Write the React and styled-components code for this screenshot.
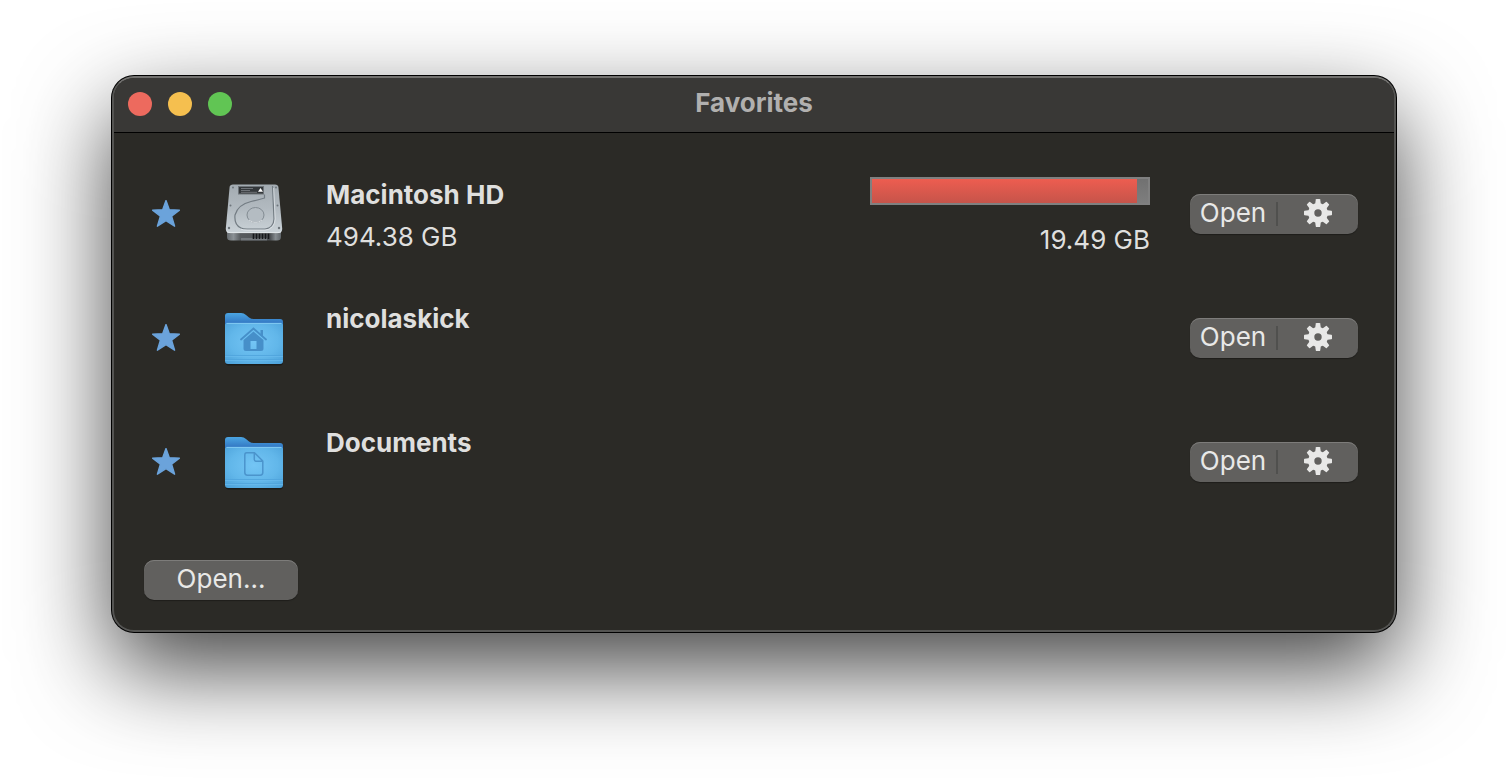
import React, { useState } from "react";
import styled, { createGlobalStyle } from "styled-components";

const GlobalStyle = createGlobalStyle`
  * {
    box-sizing: border-box;
  }
  body {
    margin: 0;
    background-color: #ffffff;
    font-family: Inter, "Liberation Sans", sans-serif;
    font-size: 26px;
    color: #dfdfde;
    overflow-x: hidden;
  }
  button {
    font: inherit;
    color: inherit;
    border: none;
    padding: 0;
    background: transparent;
  }
`;
const Desktop = styled.div`
  padding: 76px 112px 148px;
`;
const Window = styled.main`
  border: 2px solid #545452;
  border-top-color: #72716f;
  border-radius: 22px;
  background-color: #2b2a26;
  box-shadow: 0 0 0 1px #000000, 0 36px 92px rgba(0, 0, 0, 0.74);
`;
const TitleBar = styled.header`
  display: grid;
  grid-template-columns: 1fr auto 1fr;
  align-items: center;
  height: 55px;
  padding: 0 14px 2px;
  border-bottom: 1px solid #000000;
  border-radius: 20px 20px 0 0;
  background-color: #393836;
`;
const Lights = styled.div`
  display: flex;
  gap: 16px;
`;
const Light = styled.button`
  width: 24px;
  height: 24px;
  border-radius: 50%;
  background-color: ${(props) => props.$color};
`;
const Title = styled.h1`
  margin: 0;
  font-size: 26px;
  font-weight: 700;
  line-height: 32px;
  padding-bottom: 2px;
  color: #b1b0af;
`;
const List = styled.ul`
  list-style-type: none;
  margin: 0;
  padding: 19px 36px 0 38px;
`;
const Item = styled.li`
  display: flex;
  align-items: center;
  height: 124px;
`;
const StarButton = styled.button`
  width: 28px;
  height: 28px;
  margin-right: 42px;
  svg {
    display: block;
  }
`;
const IconBlock = styled.div`
  width: 64px;
  height: 64px;
  margin-right: 40px;
  svg {
    display: block;
  }
`;
const TextBlock = styled.div`
  flex: 1;
  align-self: flex-start;
  padding-top: 22px;
  p {
    margin: 0;
    line-height: 42px;
  }
`;
const Name = styled.h2`
  margin: 0;
  font-size: 26px;
  font-weight: 700;
  line-height: 42px;
`;
const UsageBlock = styled.div`
  align-self: flex-start;
  width: 280px;
  margin-right: 40px;
  padding-top: 25px;
  text-align: right;
  p {
    margin: 14px 0 0;
    line-height: 42px;
  }
`;
const Bar = styled.div`
  height: 28px;
  border: 2px solid #808080;
  background: linear-gradient(#717171, #7e7e7e);
`;
const BarFill = styled.div`
  height: 100%;
  background: linear-gradient(#ed5d50, #c6544a);
`;
const buttonFace = `
  height: 40px;
  border-radius: 10px;
  background-color: #61605e;
  box-shadow: inset 0 1px 0 #7d7c7a, 0 1px 1px rgba(0, 0, 0, 0.3);
  color: #e8e8e7;
  line-height: 38px;
`;
const SplitButton = styled.div`
  ${buttonFace}
  display: flex;
  align-items: center;
  width: 168px;
`;
const OpenButton = styled.button`
  width: 86px;
  height: 40px;
  padding-bottom: 2px;
`;
const Divider = styled.span`
  width: 2px;
  height: 24px;
  background-color: #50504e;
`;
const GearButton = styled.button`
  display: flex;
  flex: 1;
  align-items: center;
  justify-content: center;
  height: 40px;
  padding-bottom: 2px;
`;
const Footer = styled.footer`
  display: flex;
  padding: 36px 30px 30px;
`;
const OpenOther = styled.button`
  ${buttonFace}
  width: 154px;
  padding-bottom: 2px;
`;

const Star = ({ filled }) => (
  <svg width="28" height="28" viewBox="0 0 28 28">
    <path
      d="M14 0.6 17.3 9.8 27.4 10.1 19.6 16.2 22.6 26.2 14 20.6 5.4 26.2 8.4 16.2 0.6 10.1 10.7 9.8Z"
      fill={filled ? "#6ba3db" : "none"}
      stroke="#6ba3db"
      strokeWidth="1.4"
      strokeLinejoin="round"
    />
  </svg>
);

const Gear = () => (
  <svg width="28" height="28" viewBox="0 0 28 28">
    <circle cx="14" cy="14" r="6.8" fill="none" stroke="#e8e8e7" strokeWidth="6.2" />
    {[0, 45, 90, 135, 180, 225, 270, 315].map((angle) => (
      <path
        key={angle}
        d="M11 6 11.8 0.6Q11.9 0 12.5 0H15.5Q16.1 0 16.2 0.6L17 6Z"
        fill="#e8e8e7"
        transform={`rotate(${angle} 14 14)`}
      />
    ))}
  </svg>
);

const DriveIcon = () => (
  <svg width="64" height="64" viewBox="0 0 64 64">
    <defs>
      <linearGradient id="driveTop" x1="0" y1="0" x2="0" y2="1">
        <stop offset="0" stopColor="#a3abb1" />
        <stop offset="0.5" stopColor="#b2bac0" />
        <stop offset="1" stopColor="#cbd3d8" />
      </linearGradient>
      <linearGradient id="driveFront" x1="0" y1="0" x2="1" y2="0">
        <stop offset="0" stopColor="#676c70" />
        <stop offset="0.12" stopColor="#8b9195" />
        <stop offset="0.25" stopColor="#575b5e" />
        <stop offset="0.8" stopColor="#4c5053" />
        <stop offset="0.9" stopColor="#868c90" />
        <stop offset="1" stopColor="#5f6569" />
      </linearGradient>
    </defs>
    <path d="M5 46H59V55Q59 58.6 55 58.6H9Q5 58.6 5 55Z" fill="url(#driveFront)" />
    <path d="M19 56H45V58.4H19Z" fill="#73787c" />
    <path
      d="M31.5 51.5V57M34.5 51.5V57M37.5 51.5V57M40.5 51.5V57M43.5 51.5V57M46.5 51.5V57"
      stroke="#15171a"
      strokeWidth="1.6"
    />
    <path
      d="M11 2.5H53Q56 2.5 56.4 5L60.2 46.5Q60.4 50.5 57 51H7Q3.6 50.5 3.8 46.5L7.6 5Q8 2.5 11 2.5Z"
      fill="url(#driveTop)"
    />
    <path d="M5 49.5Q6 50.6 8 50.6H56Q58 50.6 59 49.5" fill="none" stroke="#e3e8eb" />
    <path
      d="M42.500 12.500V16Q36 18 29 19.500Q16 22.500 13 33Q12 43 19 46Q21 47 25 47H43Q51.500 46 52 37L50.500 4"
      fill="none"
      stroke="#737c83"
      strokeWidth="1.2"
    />
    <path
      d="M19 47.200Q21 48.200 25 48.200H43Q52.700 47 53.200 37L51.700 6"
      fill="none"
      stroke="#dfe5e9"
      strokeWidth="0.8"
    />
    <ellipse cx="33.5" cy="33" rx="8.5" ry="7.5" fill="#b4bcc2" stroke="#828b92" />
    <path d="M27 38Q33.500 43 40 38" fill="none" stroke="#e2e7ea" strokeWidth="0.9" />
    <rect x="16" y="4" width="26" height="8.500" fill="#6e7479" />
    <rect x="17" y="5" width="24" height="6.500" fill="#34383b" />
    <path d="M19 6.500H31M19 8.500H28M19 10.300H35" stroke="#7d8286" strokeWidth="0.8" />
    <path d="M36 9.800 38.500 6 41 9.800Z" fill="#ffffff" />
    <g fill="#6d757b">
      <circle cx="11" cy="5.5" r="1" />
      <circle cx="54" cy="5.5" r="1" />
      <circle cx="8.500" cy="23.500" r="1" />
      <circle cx="55.500" cy="23.500" r="1" />
      <circle cx="7" cy="46" r="1.200" />
      <circle cx="57" cy="46" r="1.200" />
    </g>
  </svg>
);

const FolderIcon = ({ id, children }) => (
  <svg width="64" height="64" viewBox="0 0 64 64">
    <defs>
      <radialGradient id={`${id}Front`} cx="0.5" cy="0.45" r="0.75">
        <stop offset="0" stopColor="#74c5f5" />
        <stop offset="0.55" stopColor="#62b7ea" />
        <stop offset="1" stopColor="#4a9fd8" />
      </radialGradient>
      <linearGradient id={`${id}Back`} x1="0" y1="0" x2="0" y2="1">
        <stop offset="0" stopColor="#4ba5e2" />
        <stop offset="0.4" stopColor="#357cc6" />
      </linearGradient>
    </defs>
    <rect x="3.5" y="50" width="57.500" height="9.500" rx="3" fill="#1b1b19" />
    <path
      d="M3 10Q3 7 6 7H19Q22 7 24 9L27 11.500Q29 13 32 13H58Q61 13 61 16V30H3Z"
      fill={`url(#${id}Back)`}
    />
    <path
      d="M3 19Q3 17 6 17H58Q61 17 61 19V55Q61 58 58 58H6Q3 58 3 55Z"
      fill={`url(#${id}Front)`}
    />
    <path d="M4.500 17.400H59.500" stroke="#82cbf3" />
    <path d="M3 49.500H61M3 53.500H61" stroke="#4fa3dc" strokeWidth="0.8" />
    <path d="M3 50.500H61M3 54.500H61" stroke="#6cbcee" strokeWidth="0.6" />
    {children}
  </svg>
);

const HomeIcon = () => (
  <FolderIcon id="home">
    <path d="M19 33.500 31.500 22.500 44 33.500" fill="none" stroke="#468fc9" strokeWidth="1.8" strokeLinecap="round" />
    <path d="M38.500 24H41V31L38.500 29Z" fill="#468fc9" />
    <path
      d="M31.500 25.500 41.500 34V42.500Q41.500 45 39 45H24Q21.500 45 21.500 42.500V34ZM28.500 35V43H34.500V35Z"
      fill="#468fc9"
      fillRule="evenodd"
    />
  </FolderIcon>
);

const DocumentsIcon = () => (
  <FolderIcon id="documents">
    <path
      d="M24.500 22.700H32.500L40.800 31V42.500Q40.800 45.200 38.100 45.200H25.500Q22.800 45.200 22.800 42.500V25Q22.800 22.700 24.500 22.700ZM32.300 23V29.500Q32.300 31.200 34 31.200H40.500"
      fill="none"
      stroke="#4b94cc"
      strokeWidth="1.5"
      strokeLinejoin="round"
    />
  </FolderIcon>
);

const favorites = [
  { name: "Macintosh HD", total: 494.38, free: 19.49, Icon: DriveIcon },
  { name: "nicolaskick", Icon: HomeIcon },
  { name: "Documents", Icon: DocumentsIcon },
];

const FavoriteItem = ({ name, total, free, Icon }) => {
  const [isFavorite, setFavorite] = useState(true);
  const used = total ? ((total - free) / total) * 100 : 0;
  return (
    <Item>
      <StarButton
        aria-label={`Favorite ${name}`}
        aria-pressed={isFavorite}
        onClick={() => setFavorite(!isFavorite)}
      >
        <Star filled={isFavorite} />
      </StarButton>
      <IconBlock>
        <Icon />
      </IconBlock>
      <TextBlock>
        <Name>{name}</Name>
        {total && <p>{total} GB</p>}
      </TextBlock>
      {total && (
        <UsageBlock>
          <Bar role="progressbar" aria-label="Used space" aria-valuenow={Math.round(used)}>
            <BarFill style={{ width: `${used}%` }} />
          </Bar>
          <p>{free} GB</p>
        </UsageBlock>
      )}
      <SplitButton>
        <OpenButton>Open</OpenButton>
        <Divider />
        <GearButton aria-label={`Options for ${name}`}>
          <Gear />
        </GearButton>
      </SplitButton>
    </Item>
  );
};

const App = () => {
  return (
    <Desktop>
      <GlobalStyle />
      <Window>
        <TitleBar>
          <Lights>
            <Light $color="#ed6a5e" aria-label="Close" />
            <Light $color="#f5bf4f" aria-label="Minimize" />
            <Light $color="#61c554" aria-label="Zoom" />
          </Lights>
          <Title>Favorites</Title>
        </TitleBar>
        <List>
          {favorites.map((favorite) => (
            <FavoriteItem key={favorite.name} {...favorite} />
          ))}
        </List>
        <Footer>
          <OpenOther>Open...</OpenOther>
        </Footer>
      </Window>
    </Desktop>
  );
};

export default App;
